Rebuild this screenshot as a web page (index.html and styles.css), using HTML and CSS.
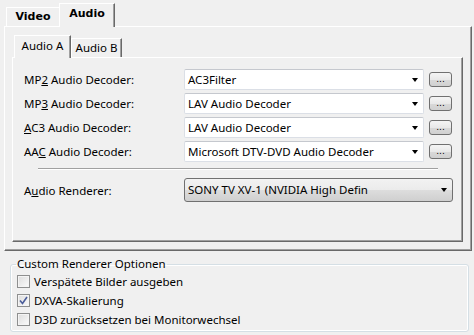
FILE: index.html
```html
<!DOCTYPE html>
<html lang="de">
<head>
  <meta charset="UTF-8">
  <title>Audio</title>
  <link rel="stylesheet" href="styles.css">
</head>
<body>

<div class="tabbar">
  <span class="tab">Video</span>
  <span class="tab active">Audio</span>
</div>

<div class="panel">
  <div class="subtabbar">
    <span class="subtab active">Audio A</span>
    <span class="subtab">Audio B</span>
  </div>

  <div class="subpanel">
    <div class="row">
      <label>MP<u>2</u> Audio Decoder:</label>
      <div class="combo">AC3Filter<i class="arrow"></i></div>
      <button class="more">...</button>
    </div>
    <div class="row">
      <label>MP<u>3</u> Audio Decoder:</label>
      <div class="combo">LAV Audio Decoder<i class="arrow"></i></div>
      <button class="more">...</button>
    </div>
    <div class="row">
      <label><u>A</u>C3 Audio Decoder:</label>
      <div class="combo">LAV Audio Decoder<i class="arrow"></i></div>
      <button class="more">...</button>
    </div>
    <div class="row">
      <label>AA<u>C</u> Audio Decoder:</label>
      <div class="combo">Microsoft DTV-DVD Audio Decoder<i class="arrow"></i></div>
      <button class="more">...</button>
    </div>

    <div class="sep"></div>

    <div class="row renderer">
      <label>A<u>u</u>dio Renderer:</label>
      <div class="dropdown">SONY TV XV-1 (NVIDIA High Defin<i class="arrow"></i></div>
    </div>
  </div>
</div>

<fieldset class="group">
  <legend>Custom Renderer Optionen</legend>
  <div class="check"><span class="box"></span>Verspätete Bilder ausgeben</div>
  <div class="check"><span class="box">
    <svg width="9" height="9" viewBox="0 0 9 9"><path d="M1 4.5 L3.5 7.5 L8 1" fill="none" stroke="#4b5d9a" stroke-width="1.6"/></svg>
  </span>DXVA-Skalierung</div>
  <div class="check"><span class="box"></span>D3D zurücksetzen bei Monitorwechsel</div>
</fieldset>

</body>
</html>
```

FILE: styles.css
```css
body {
  margin: 0;
  width: 474px;
  height: 335px;
  overflow: hidden;
  background: #f0f0f0;
  font-family: "Noto Sans", "Open Sans", sans-serif;
  font-size: 11.5px;
  color: #000;
}
.tabbar {
  display: flex;
  align-items: flex-end;
  height: 26px;
  padding-left: 6px;
}
.tab {
  box-sizing: border-box;
  width: 53px;
  height: 19px;
  border-top: 1px solid #fff;
  border-left: 1px solid #fff;
  font: bold 11px "DejaVu Sans", sans-serif;
  line-height: 18px;
  text-align: center;
}
.tab.active {
  position: relative;
  z-index: 1;
  width: 56px;
  height: 24px;
  margin-bottom: -1px;
  line-height: 20px;
  background: #f0f0f0;
  border-right: 1px solid #696969;
  box-shadow: inset -1px 0 0 #a0a0a0;
}
.panel {
  box-sizing: border-box;
  width: 468px;
  height: 225px;
  margin-left: 4px;
  padding-left: 8px;
  border-top: 1px solid #fff;
  border-left: 1px solid #fff;
  border-right: 1px solid #696969;
  border-bottom: 1px solid #696969;
  box-shadow: inset -1px -1px 0 #a0a0a0;
}
.subtabbar {
  display: flex;
  align-items: flex-end;
  height: 30px;
  padding-left: 1px;
}
.subtab {
  box-sizing: border-box;
  width: 51px;
  height: 19px;
  border-top: 1px solid #fff;
  border-left: 1px solid #fff;
  border-right: 1px solid #696969;
  box-shadow: inset -1px 0 0 #a0a0a0;
  line-height: 18px;
  text-align: center;
}
.subtab.active {
  position: relative;
  z-index: 1;
  width: 57px;
  height: 23px;
  margin-bottom: -1px;
  line-height: 20px;
  background: #f0f0f0;
}
.subpanel {
  box-sizing: border-box;
  width: 451px;
  height: 185px;
  margin-left: -1px;
  padding: 11px 0 0 11px;
  border-top: 1px solid #fff;
  border-left: 1px solid #fff;
  border-right: 1px solid #696969;
  border-bottom: 1px solid #696969;
  box-shadow: inset -1px -1px 0 #a0a0a0;
}
.row {
  display: flex;
  align-items: center;
  height: 21px;
  margin-bottom: 3px;
}
.row label {
  width: 160px;
  flex: none;
}
.combo {
  position: relative;
  box-sizing: border-box;
  width: 240px;
  height: 21px;
  padding-left: 3px;
  line-height: 19px;
  background: #fff;
  border: 1px solid #dbdfe6;
  border-top-color: #c5c8ce;
  border-radius: 2px;
}
.arrow {
  position: absolute;
  right: 5px;
  top: 8px;
  border-left: 3.5px solid transparent;
  border-right: 3.5px solid transparent;
  border-top: 4px solid #000;
}
.more {
  box-sizing: border-box;
  width: 23px;
  height: 15px;
  margin-left: 5px;
  padding: 0;
  border: 1px solid #707070;
  border-radius: 3px;
  background: linear-gradient(#f4f4f4, #e9e9e9 50%, #d9d9d9 51%, #d0d0d0);
  font: 9px "DejaVu Sans", sans-serif;
  line-height: 13px;
  color: #000;
}
.sep {
  width: 400px;
  margin: 6px 0 0 14px;
  border-top: 1px solid #a0a0a0;
  border-bottom: 1px solid #fff;
}
.renderer {
  height: 24px;
  margin-top: 8px;
}
.dropdown {
  position: relative;
  box-sizing: border-box;
  width: 269px;
  height: 24px;
  padding-left: 3px;
  line-height: 21px;
  border: 1px solid #707070;
  border-radius: 3px;
  background: linear-gradient(#f2f2f2, #ebebeb 50%, #dddddd 51%, #cfcfcf);
}
.dropdown .arrow {
  top: 9px;
}
.group {
  box-sizing: border-box;
  width: 459px;
  height: 75px;
  margin: 6px 0 0 10px;
  padding: 0 6px;
  border: 1px solid #d5dfe5;
  border-radius: 3px;
  box-shadow: inset 0 0 0 1px #fff;
}
.group legend {
  padding: 0 1px;
  margin-left: -1px;
  line-height: 14px;
}
.check {
  display: flex;
  align-items: center;
  height: 19px;
}
.check:first-of-type {
  margin-top: 1px;
}
.box {
  box-sizing: border-box;
  display: flex;
  align-items: center;
  justify-content: center;
  width: 13px;
  height: 13px;
  margin-right: 4px;
  border: 1px solid #8e8f8f;
  background: linear-gradient(135deg, #dcdcdc, #fbfbfb);
  box-shadow: inset 0 0 0 1px #f4f4f4;
}
```
